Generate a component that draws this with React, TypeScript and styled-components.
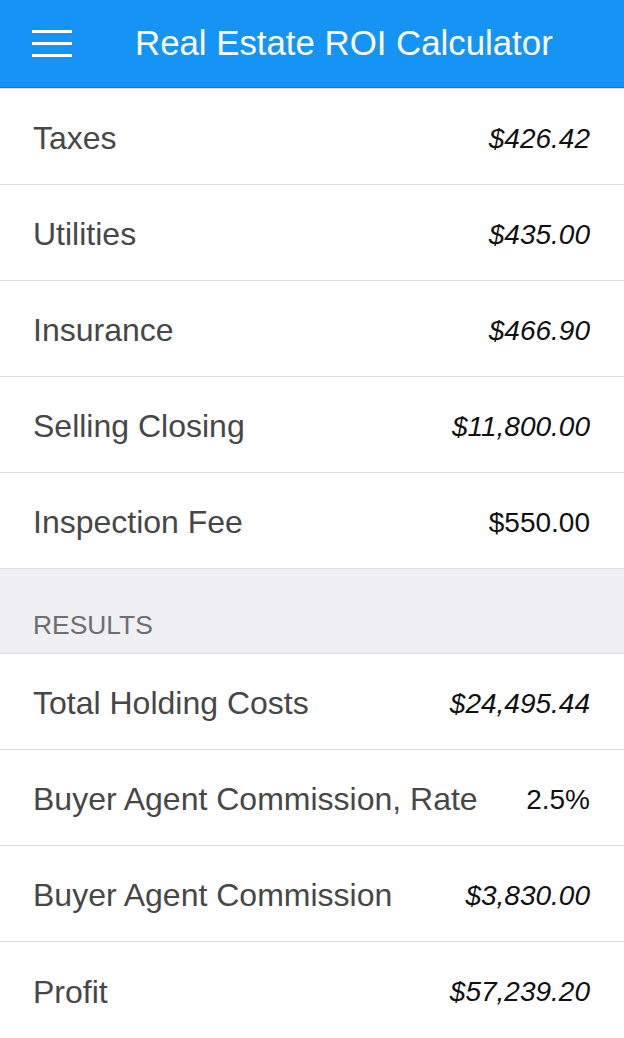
import React from "react";
import styled, { createGlobalStyle } from "styled-components";

type Item = {
  label: string;
  value: string;
  italic?: boolean;
};

const expenses: Item[] = [
  { label: "Taxes", value: "$426.42", italic: true },
  { label: "Utilities", value: "$435.00", italic: true },
  { label: "Insurance", value: "$466.90", italic: true },
  { label: "Selling Closing", value: "$11,800.00", italic: true },
  { label: "Inspection Fee", value: "$550.00" },
];

const results: Item[] = [
  { label: "Total Holding Costs", value: "$24,495.44", italic: true },
  { label: "Buyer Agent Commission, Rate", value: "2.5%" },
  { label: "Buyer Agent Commission", value: "$3,830.00", italic: true },
  { label: "Profit", value: "$57,239.20", italic: true },
];

const App = () => {
  return (
    <Page>
      <GlobalStyle />
      <Header>
        <MenuButton aria-label="menu">
          <span />
          <span />
          <span />
        </MenuButton>
        <Title>Real Estate ROI Calculator</Title>
      </Header>
      <List>
        {expenses.map((item) => (
          <Row key={item.label}>
            <Label>{item.label}</Label>
            <Value $italic={item.italic}>{item.value}</Value>
          </Row>
        ))}
        <SectionHead>RESULTS</SectionHead>
        {results.map((item, i) => (
          <Row key={item.label} $last={i === results.length - 1}>
            <Label>{item.label}</Label>
            <Value $italic={item.italic}>{item.value}</Value>
          </Row>
        ))}
      </List>
    </Page>
  );
};

const GlobalStyle = createGlobalStyle`
  html, body {
    margin: 0;
    padding: 0;
    background: #fff;
  }
  body {
    font-family: "Liberation Sans", Arial, Helvetica, sans-serif;
  }
`;

const Page = styled.div`
  width: 624px;
  min-height: 1038px;
  background: #fff;
`;

const Header = styled.header`
  height: 87px;
  background: #1594f5;
  border-bottom: 1px solid #0f7ccf;
  box-shadow: 0 1px 0 #dcdcdc;
  display: flex;
  align-items: center;
  padding: 0 32px;
  box-sizing: content-box;
  position: relative;
  z-index: 1;
`;

const MenuButton = styled.div`
  width: 40px;
  display: flex;
  flex-direction: column;
  gap: 9px;
  margin-top: -1px;

  span {
    display: block;
    height: 3px;
    background: #fff;
  }
`;

const Title = styled.h1`
  margin: 0 0 0 63px;
  color: #fff;
  font-size: 34.8px;
  font-weight: 400;
  line-height: 1;
`;

const List = styled.div`
  padding-top: 1px;
`;

const Row = styled.div<{ $last?: boolean }>`
  height: 96px;
  display: flex;
  align-items: center;
  justify-content: space-between;
  padding: 4px 34px 0 33px;
  box-sizing: border-box;
  border-bottom: ${(p) => (p.$last ? "none" : "1px solid #dcdcdc")};
`;

const Label = styled.span`
  color: #474747;
  font-size: 32px;
`;

const Value = styled.span<{ $italic?: boolean }>`
  color: #111;
  font-size: 28px;
  font-style: ${(p) => (p.$italic ? "italic" : "normal")};
`;

const SectionHead = styled.div`
  height: 85px;
  box-sizing: border-box;
  background: #efeff4;
  border-bottom: 1px solid #dcdcdc;
  color: #6d6d72;
  font-size: 26.4px;
  display: flex;
  align-items: flex-end;
  padding: 0 33px 12px;
`;

export default App;
